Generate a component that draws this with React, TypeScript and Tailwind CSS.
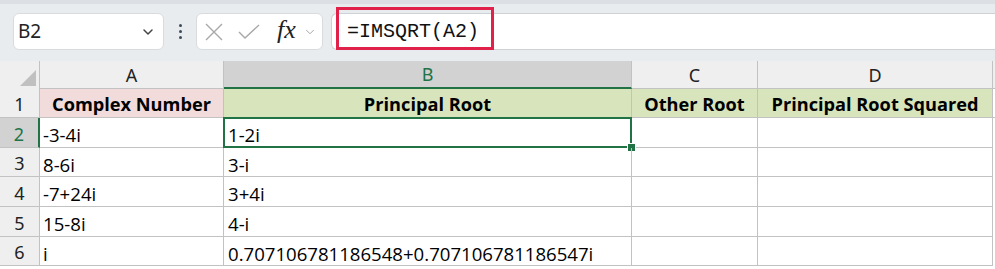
import { ChevronDown } from "lucide-react";

const cols = [
  { key: "A", w: "w-[184px]" },
  { key: "B", w: "w-[408px]" },
  { key: "C", w: "w-[126px]" },
  { key: "D", w: "w-[235px]" },
];

const heads = [
  { text: "Complex Number", bg: "bg-[#f2dcdb]" },
  { text: "Principal Root", bg: "bg-[#d8e4bc]" },
  { text: "Other Root", bg: "bg-[#d8e4bc]" },
  { text: "Principal Root Squared", bg: "bg-[#d8e4bc]" },
];

const rows = [
  { n: 2, h: "h-[30px]", a: "-3-4i", b: "1-2i" },
  { n: 3, h: "h-[29px]", a: "8-6i", b: "3-i" },
  { n: 4, h: "h-[30px]", a: "-7+24i", b: "3+4i" },
  { n: 5, h: "h-[30px]", a: "15-8i", b: "4-i" },
  { n: 6, h: "h-[29px]", a: "i", b: "0.707106781186548+0.707106781186547i" },
];

const cellFont = { fontFamily: "'Open Sans', 'Noto Sans', sans-serif" };

export default function App() {
  return (
    <div className="w-[995px] h-[269px] overflow-hidden bg-white" style={{ fontFamily: "'Noto Sans', sans-serif" }}>
      {/* toolbar */}
      <div className="h-[61px] bg-[#e9ecef] relative">
        <div className="h-[4px] bg-[#dcdfe3]" />
        <div className="flex items-start pt-[9px] pl-[13px]">
          <div className="w-[151px] h-[37px] rounded-md bg-white border border-[#d9dcdf] flex items-center justify-between pl-[4px] pr-[7px]">
            <span className="text-[19px] text-[#222]">B2</span>
            <ChevronDown className="w-[16px] h-[16px] text-[#444]" strokeWidth={2.2} />
          </div>
          <div className="w-[32px] h-[37px] flex flex-col items-center justify-center gap-[3px]">
            <span className="w-[3px] h-[3px] rounded-full bg-[#3c4a5a]" />
            <span className="w-[3px] h-[3px] rounded-full bg-[#3c4a5a]" />
            <span className="w-[3px] h-[3px] rounded-full bg-[#3c4a5a]" />
          </div>
          <div className="w-[127px] h-[37px] rounded-md bg-white border border-[#d9dcdf] flex items-center pl-[8px]">
            <svg width="18" height="18" viewBox="0 0 18 18" className="text-[#a8a8a8]">
              <path d="M1 1 L17 17 M17 1 L1 17" stroke="currentColor" strokeWidth="1.4" fill="none" />
            </svg>
            <svg width="22" height="15" viewBox="0 0 22 15" className="ml-[15px] text-[#a8a8a8]">
              <path d="M1 8 L7 14 L21 1" stroke="currentColor" strokeWidth="1.4" fill="none" />
            </svg>
            <span
              className="ml-[17px] text-[26px] italic text-[#222] leading-none -mt-[3px]"
              style={{ fontFamily: "'Liberation Serif', serif" }}
            >
              fx
            </span>
            <ChevronDown className="w-[14px] h-[14px] text-[#999] ml-[7px]" strokeWidth={1.5} />
          </div>
          <div className="ml-[8px] flex-1 h-[37px] bg-white border-y border-l border-[#cfd2d5] rounded-l-md relative flex items-center">
            <span
              className="ml-[15px] text-[20px] text-[#111]"
              style={{ fontFamily: "'Liberation Mono', monospace" }}
            >
              =IMSQRT(A2)
            </span>
            <div className="absolute left-[4px] top-[-7px] w-[158px] h-[43px] border-[3px] border-[#e0224a]" />
          </div>
        </div>
      </div>

      {/* column headers */}
      <div className="flex h-[28px] bg-[#efefef] text-[18px]">
        <div className="w-[40px] border-r border-[#c2c2c2] relative">
          <div
            className="absolute right-[3px] bottom-[3px] w-[16px] h-[16px] bg-[#c0c0c0]"
            style={{ clipPath: "polygon(100% 0, 100% 100%, 0 100%)" }}
          />
        </div>
        {cols.map((c) => (
          <div
            key={c.key}
            className={`${c.w} flex items-center justify-center border-r pt-[1px] ${
              c.key === "B"
                ? "bg-[#d2d2d2] text-[#217346] border-b-2 border-b-[#217346] border-r-[#c2c2c2]"
                : "border-[#c2c2c2] border-b border-b-[#c2c2c2] text-[#222]"
            }`}
          >
            {c.key}
          </div>
        ))}
        <div className="flex-1 border-b border-[#c2c2c2]" />
      </div>

      {/* row 1 */}
      <div className="flex h-[29px] text-[18.2px]" style={cellFont}>
        <div
          className="w-[40px] bg-[#efefef] border-r border-b border-[#c2c2c2] flex items-center justify-center text-[18px] text-[#222] pt-[2px]"
          style={{ fontFamily: "'Noto Sans', sans-serif" }}
        >
          1
        </div>
        {heads.map((h, i) => (
          <div
            key={h.text}
            className={`${cols[i].w} ${h.bg} border-r border-b border-[#c2c2c2] flex items-center justify-center font-bold text-black pt-[3px]`}
          >
            {h.text}
          </div>
        ))}
        <div className="flex-1 border-b border-[#c2c2c2]" />
      </div>

      {rows.map((r) => (
        <div key={r.n} className={`flex ${r.h} text-[18.6px]`} style={cellFont}>
          <div
            className={`w-[40px] border-b border-[#c2c2c2] flex items-center justify-center text-[18px] pt-[3px] ${
              r.n === 2
                ? "bg-[#d2d2d2] text-[#217346] border-r-2 border-r-[#217346]"
                : "bg-[#efefef] text-[#222] border-r border-r-[#c2c2c2]"
            }`}
            style={{ fontFamily: "'Noto Sans', sans-serif" }}
          >
            {r.n}
          </div>
          <div className={`${cols[0].w} border-r border-b border-[#c2c2c2] flex items-center pl-[3px] pt-[5px] text-black`}>
            {r.a}
          </div>
          <div className={`${cols[1].w} border-r border-b border-[#c2c2c2] flex items-center pl-[4px] pt-[5px] text-black relative`}>
            {r.b}
            {r.n === 2 && (
              <>
                <div className="absolute left-[-1px] top-[-1px] right-[-1px] bottom-[-1px] border-2 border-[#217346]" />
                <div className="absolute right-[-5px] bottom-[-5px] w-[9px] h-[9px] bg-[#217346] border border-white" />
              </>
            )}
          </div>
          <div className={`${cols[2].w} border-r border-b border-[#c2c2c2]`} />
          <div className={`${cols[3].w} border-r border-b border-[#c2c2c2]`} />
          <div className="flex-1" />
        </div>
      ))}
    </div>
  );
}
